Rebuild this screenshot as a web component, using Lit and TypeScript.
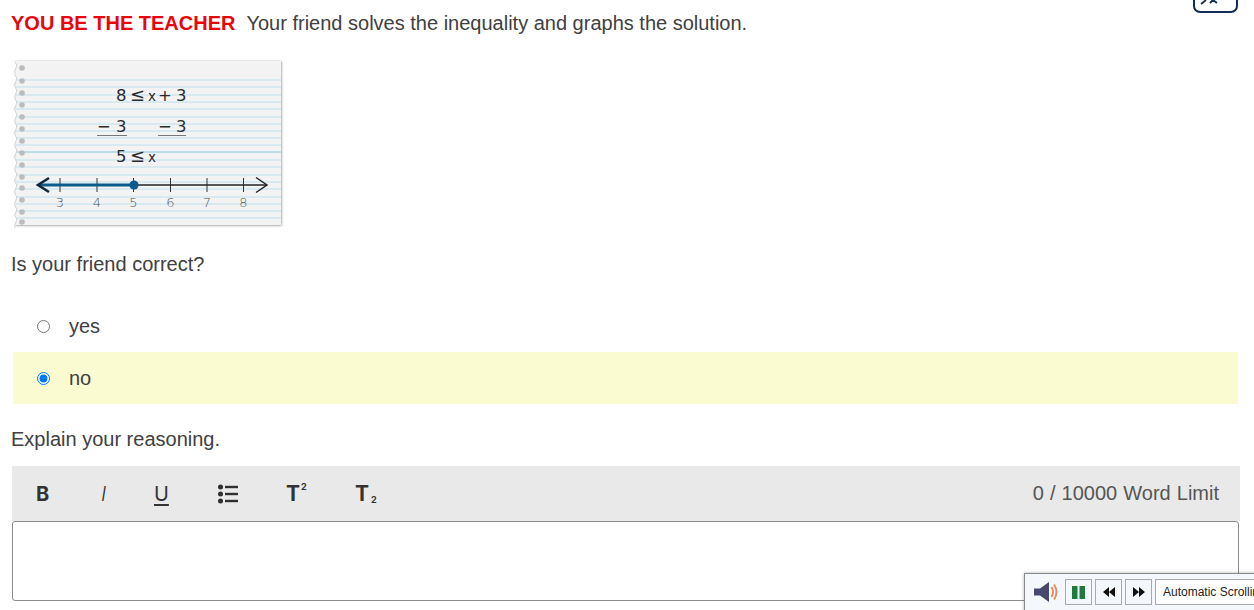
import { LitElement, html, css, svg } from 'lit';
import { customElement } from 'lit/decorators.js';

const RULES = [80, 87, 95, 102, 109, 117, 124, 131, 138, 145, 152, 160, 167, 175, 182, 189, 197, 204, 211, 218];
const HOLES = [68, 81, 93, 105, 117, 129, 141, 153, 165, 177, 188, 200, 212, 222];
const TICKS = [
  [60, '3'],
  [97, '4'],
  [133.5, '5'],
  [170.5, '6'],
  [207, '7'],
  [243.5, '8'],
] as const;

const notebook = html`<svg class="note" viewBox="12 58 274 172" width="274" height="172">
  <defs>
    <filter id="paper" x="-3%" y="-3%" width="106%" height="106%">
      <feDropShadow dx="0.5" dy="0.5" stdDeviation="1.3" flood-color="#000" flood-opacity="0.45" />
    </filter>
  </defs>
  <rect x="15" y="61" width="266" height="164" fill="#f3f3f3" filter="url(#paper)" />
  ${RULES.map(
    (y) => svg`<line x1="16" x2="281" y1=${y} y2=${y} stroke=${y === 152 ? '#86c5de' : '#bde0ee'} />`
  )}
  ${HOLES.map(
    (y) => svg`<path d="M12 ${y - 6}h3q3 3 1 6q-2 3 -1 6h-3z" fill="#fff" />
      <path d="M15 ${y - 6}q3 3 1 6q-2 3 -1 6" fill="none" stroke="#d2d2d2" />
      <circle cx="22" cy=${y} r="2.8" fill="#bcbcbc" />`
  )}
  <g class="hand">
    <text x="116" y="101">8</text>
    <text x="130" y="101" class="rel">≤</text>
    <text x="148" y="101" class="small">x</text>
    <text x="158" y="101">+</text>
    <text x="176" y="101">3</text>
    <text x="97" y="132">−</text>
    <text x="116" y="132">3</text>
    <text x="158" y="132">−</text>
    <text x="176" y="132">3</text>
    <text x="116" y="162">5</text>
    <text x="130" y="162" class="rel">≤</text>
    <text x="148" y="162" class="small">x</text>
  </g>
  <line x1="97" x2="127" y1="135.5" y2="135.5" stroke="#777" />
  <line x1="158" x2="186" y1="135.5" y2="135.5" stroke="#777" />
  ${TICKS.map(
    ([x, n]) => svg`<line x1=${x} x2=${x} y1="178" y2="192" stroke="#333" />
      <text class="tick" x=${x} y="207" text-anchor="middle">${n}</text>`
  )}
  <line x1="134" x2="266" y1="185" y2="185" stroke="#222" stroke-width="1.3" />
  <path d="M256 177.5 267 185 256 192.5" fill="none" stroke="#222" stroke-width="1.5" />
  <line x1="39" x2="134" y1="185" y2="185" stroke="#0b5a8c" stroke-width="3" />
  <path d="M49 178 38 185 49 192" fill="none" stroke="#10283c" stroke-width="2.6" />
  <circle cx="134" cy="185" r="4.6" fill="#0b5a8c" />
</svg>`;

@customElement('app-root')
export class AppRoot extends LitElement {
  static styles = css`
    :host {
      display: block;
      position: relative;
      height: 610px;
      overflow: hidden;
      background: #fff;
      color: #404040;
      font-family: 'Liberation Sans', Arial, sans-serif;
      font-size: 20px;
      line-height: 23px;
    }
    .main {
      padding: 12px 14px 0 11px;
    }
    .intro {
      display: flex;
      gap: 11px;
    }
    .label {
      color: #e8060c;
      font-weight: 700;
    }
    .note {
      display: block;
      margin: 23px 0 0 1px;
    }
    .hand text {
      font-family: 'DejaVu Sans', sans-serif;
      font-size: 16.500px;
      fill: #2b2b2b;
    }
    .hand text.small {
      font-size: 13.500px;
    }
    .hand text.rel {
      font-size: 18px;
    }
    .tick {
      font-family: 'DejaVu Sans', sans-serif;
      font-size: 13px;
      font-weight: 300;
      fill: #555;
    }
    .question {
      margin-top: 23px;
    }
    .options {
      margin: 24px 2px 0 2px;
    }
    .option {
      display: flex;
      align-items: center;
      gap: 19px;
      height: 52px;
      padding-left: 24px;
    }
    .option.selected {
      background: #fbfbd2;
    }
    .option input {
      margin: 0;
      width: 13px;
      height: 13px;
    }
    .explain {
      margin-top: 24px;
    }
    .toolbar {
      display: flex;
      align-items: center;
      height: 55px;
      margin: 15px 0 0 1px;
      padding: 0 21px 0 24px;
      background: #e9e9e9;
      color: #333;
    }
    .tool {
      font-family: Inter, sans-serif;
      font-size: 20px;
      line-height: 22px;
      display: flex;
      align-items: center;
    }
    .bold {
      font-weight: 700;
    }
    .t-b {
      width: 60px;
    }
    .t-i {
      box-sizing: border-box;
      width: 58px;
      padding-left: 5px;
      font-style: italic;
      font-weight: 300;
    }
    .t-u {
      width: 64px;
      text-decoration: underline;
      text-underline-offset: 3px;
      text-decoration-thickness: 1.500px;
      font-weight: 400;
    }
    .t-list {
      width: 68px;
    }
    .t-sup {
      width: 69px;
      font-size: 21px;
    }
    .t-sub {
      font-size: 21px;
    }
    .tool sup,
    .tool sub {
      font-size: 9px;
      line-height: 1;
      position: relative;
    }
    .tool sup {
      top: -7px;
      left: 1px;
    }
    .tool sub {
      top: 6px;
      left: 2px;
    }
    .limit {
      margin-left: auto;
      color: #555;
      word-spacing: 0.500px;
    }
    .editor {
      height: 78px;
      border: 1px solid #8c8c8c;
      border-radius: 3px;
      margin: 0 1px;
      background: #fff;
    }
    .closer {
      position: absolute;
      top: -20px;
      left: 1193px;
      width: 41px;
      height: 29px;
      border: 2px solid #0e2e55;
      border-radius: 7px;
      background: #fff;
    }
    .closer svg {
      position: absolute;
      left: 5px;
      top: 18px;
    }
    .player {
      position: absolute;
      left: 1024px;
      top: 573px;
      width: 260px;
      height: 50px;
      box-sizing: border-box;
      display: flex;
      align-items: flex-start;
      gap: 3px;
      padding: 5px 0 0 9px;
      background: #f4f7fb;
      border: 1px solid #8a8a8a;
      box-shadow: 0 0 3px rgba(0, 0, 0, 0.3);
    }
    .speaker {
      margin: 3px 4px 0 0;
    }
    .pbtn {
      box-sizing: border-box;
      height: 26px;
      width: 27px;
      display: flex;
      align-items: center;
      justify-content: center;
      background: #f4f7fb;
      border: 1px solid #a9a9a9;
    }
    .scroll {
      box-sizing: border-box;
      height: 26px;
      padding: 0 7px;
      border: 1px solid #a9a9a9;
      background: #fff;
      color: #222;
      font-size: 12px;
      line-height: 24px;
      white-space: nowrap;
    }
  `;

  render() {
    return html`
      <div class="main">
        <div class="intro">
          <span class="label">YOU BE THE TEACHER</span>
          <span>Your friend solves the inequality and graphs the solution.</span>
        </div>
        ${notebook}
        <div class="question">Is your friend correct?</div>
        <div class="options">
          <label class="option"><input type="radio" name="a" />yes</label>
          <label class="option selected"><input type="radio" name="a" checked />no</label>
        </div>
        <div class="explain">Explain your reasoning.</div>
        <div class="toolbar">
          <span class="tool bold t-b">B</span>
          <span class="tool t-i">I</span>
          <span class="tool t-u">U</span>
          <span class="tool t-list">
            <svg width="20" height="20" viewBox="0 0 20 20" fill="#2f2f2f">
              <circle cx="2.500" cy="3" r="2.500" />
              <circle cx="2.500" cy="10" r="2.500" />
              <circle cx="2.500" cy="17" r="2.500" />
              <rect x="7" y="1.800" width="13" height="2.400" />
              <rect x="7" y="8.800" width="13" height="2.400" />
              <rect x="7" y="15.800" width="13" height="2.400" />
            </svg>
          </span>
          <span class="tool bold t-sup">T<sup>2</sup></span>
          <span class="tool bold t-sub">T<sub>2</sub></span>
          <span class="limit">0 / 10000 Word Limit</span>
        </div>
        <div class="editor"></div>
      </div>

      <div class="closer">
        <svg width="22" height="6" viewBox="0 0 22 6" fill="none" stroke="#0e2e55" stroke-width="1.800">
          <path d="M1 4 6 0M10 3 13 0 17 3" />
        </svg>
      </div>

      <div class="player">
        <svg class="speaker" width="24" height="20" viewBox="0 0 24 20">
          <path d="M0 6.500h6L15 0v20L6 13.500H0z" fill="#46496e" />
          <path d="M17.500 5q3 5 0 10M20 2.500q5 7.500 0 15" fill="none" stroke="#e8875a" stroke-width="1.800" />
        </svg>
        <div class="pbtn">
          <svg width="13" height="13" viewBox="0 0 13 13" fill="#1f7a3f">
            <rect x="0" width="5.500" height="13" />
            <rect x="7.500" width="5.500" height="13" />
          </svg>
        </div>
        <div class="pbtn">
          <svg width="12" height="10" viewBox="0 0 12 10" fill="#111">
            <path d="M6 0v10L0 5zM12 0v10L6 5z" />
          </svg>
        </div>
        <div class="pbtn">
          <svg width="12" height="10" viewBox="0 0 12 10" fill="#111">
            <path d="M0 0v10l6-5zM6 0v10l6-5z" />
          </svg>
        </div>
        <div class="scroll">Automatic Scrolling</div>
      </div>
    `;
  }
}
